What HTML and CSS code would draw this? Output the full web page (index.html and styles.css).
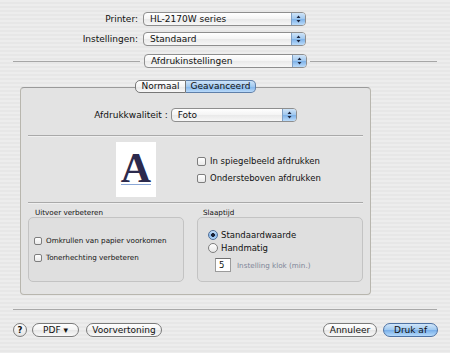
FILE: index.html
```html
<!DOCTYPE html>
<html lang="nl">
<head>
    <meta charset="UTF-8">
    <meta name="viewport" content="width=device-width, initial-scale=1.0">
    <title>Afdrukken</title>
    <link rel="stylesheet" href="styles.css">
</head>
<body>
    <div class="dialog">
        <div class="field-row">
            <span class="field-label">Printer:</span>
            <div class="popup popup-top">
                <span class="popup-text">HL-2170W series</span>
                <span class="stepper"><svg viewBox="0 0 13 12" width="13" height="12"><path d="M6.5 2.5 L8.5 5 H4.5 Z M6.5 9.5 L8.5 7 H4.5 Z" fill="#1d2740"/></svg></span>
            </div>
        </div>
        <div class="field-row">
            <span class="field-label">Instellingen:</span>
            <div class="popup popup-top">
                <span class="popup-text">Standaard</span>
                <span class="stepper"><svg viewBox="0 0 13 12" width="13" height="12"><path d="M6.5 2.5 L8.5 5 H4.5 Z M6.5 9.5 L8.5 7 H4.5 Z" fill="#1d2740"/></svg></span>
            </div>
        </div>
        <div class="pane-row">
            <span class="rule rule-left"></span>
            <div class="popup popup-top">
                <span class="popup-text">Afdrukinstellingen</span>
                <span class="stepper"><svg viewBox="0 0 13 12" width="13" height="12"><path d="M6.5 2.5 L8.5 5 H4.5 Z M6.5 9.5 L8.5 7 H4.5 Z" fill="#1d2740"/></svg></span>
            </div>
            <span class="rule rule-right"></span>
        </div>

        <div class="pane">
            <div class="tabs">
                <span class="tab tab-first">Normaal</span><span class="tab tab-last tab-active">Geavanceerd</span>
            </div>
            <div class="panel">
                <div class="quality-row">
                    <span class="quality-label">Afdrukkwaliteit :</span>
                    <div class="popup popup-quality">
                        <span class="popup-text">Foto</span>
                        <span class="stepper"><svg viewBox="0 0 13 12" width="13" height="12"><path d="M6.5 2.5 L8.5 5 H4.5 Z M6.5 9.5 L8.5 7 H4.5 Z" fill="#1d2740"/></svg></span>
                    </div>
                </div>
                <div class="separator"></div>
                <div class="preview-row">
                    <div class="preview"><span class="preview-letter">A</span></div>
                    <div class="check-list">
                        <label class="check"><span class="box"></span>In spiegelbeeld afdrukken</label>
                        <label class="check"><span class="box"></span>Ondersteboven afdrukken</label>
                    </div>
                </div>
                <div class="separator separator-low"></div>
                <div class="groups">
                    <div class="group group-left">
                        <span class="group-title">Uitvoer verbeteren</span>
                        <div class="group-box group-box-checks">
                            <label class="check check-small"><span class="box"></span>Omkrullen van papier voorkomen</label>
                            <label class="check check-small"><span class="box"></span>Tonerhechting verbeteren</label>
                        </div>
                    </div>
                    <div class="group group-right">
                        <span class="group-title">Slaaptijd</span>
                        <div class="group-box group-box-radios">
                            <label class="radio"><span class="dot dot-on"></span>Standaardwaarde</label>
                            <label class="radio"><span class="dot"></span>Handmatig</label>
                            <div class="minutes">
                                <span class="text-field">5</span>
                                <span class="hint">Instelling klok (min.)</span>
                            </div>
                        </div>
                    </div>
                </div>
            </div>
        </div>

        <div class="footer-rule"></div>
        <div class="footer">
            <span class="help">?</span>
            <span class="pill pill-pdf">PDF &#9662;</span>
            <span class="pill pill-preview">Voorvertoning</span>
            <span class="spacer"></span>
            <span class="pill pill-cancel">Annuleer</span>
            <span class="pill pill-default">Druk af</span>
        </div>
    </div>
</body>
</html>
```

FILE: styles.css
```css
body {
    margin: 0;
    font-family: "DejaVu Sans", "Liberation Sans", sans-serif;
    font-size: 9px;
    color: #111;
}
.dialog {
    width: 450px;
    height: 353px;
    box-sizing: border-box;
    padding-top: 12px;
    background: repeating-linear-gradient(#ededed 0 2px, #e7e7e7 2px 4px);
    overflow: hidden;
}

/* popups */
.popup {
    display: flex;
    align-items: center;
    height: 14px;
    box-sizing: border-box;
    border: 1px solid #8e8e8e;
    border-radius: 4px;
    background: linear-gradient(#ffffff, #f4f4f4 50%, #e9e9e9 51%, #f7f7f7);
    overflow: hidden;
}
.popup-top {
    width: 163px;
}
.popup-text {
    flex: 1;
    padding-left: 6px;
    line-height: 12px;
}
.stepper {
    display: flex;
    align-items: center;
    justify-content: center;
    width: 13px;
    height: 12px;
    border-left: 1px solid #7f9fc4;
    background: linear-gradient(#cfe4f8, #9fc7ee 50%, #7db1e8 51%, #bcdcfa);
}

.field-row {
    display: flex;
    align-items: center;
    gap: 5px;
    margin-bottom: 6px;
}
.field-label {
    width: 138px;
    text-align: right;
}
.pane-row {
    display: flex;
    align-items: center;
    padding: 2px 13px 0 13px;
}
.rule {
    flex: 1;
    height: 1px;
    background: #a6a6a6;
}
.rule-left {
    margin-right: 4px;
}
.rule-right {
    margin-left: 3px;
}

/* tabbed pane */
.pane {
    margin: 12px 0 0 20px;
    width: 351px;
}
.tabs {
    position: relative;
    z-index: 1;
    display: flex;
    justify-content: center;
    margin-bottom: -6px;
}
.tab {
    height: 13px;
    box-sizing: border-box;
    line-height: 11px;
    border: 1px solid #777;
    background: linear-gradient(#ffffff, #f3f3f3 50%, #e6e6e6 51%, #f8f8f8);
    text-align: center;
}
.tab-first {
    width: 51px;
    border-radius: 5px 0 0 5px;
}
.tab-last {
    width: 70px;
    border-left: none;
    border-radius: 0 5px 5px 0;
}
.tab-active {
    background: linear-gradient(#cde3f8, #a2c9ef 50%, #80b3e9 51%, #b9dafa);
    border-color: #5f7fa8;
}
.panel {
    height: 208px;
    box-sizing: border-box;
    padding: 20px 7px 0 7px;
    border: 1px solid #b8b6ae;
    border-top-color: #9a9a9a;
    border-radius: 4px;
    background: #e3e3e3;
}
.quality-row {
    display: flex;
    justify-content: center;
    align-items: center;
    gap: 3px;
}
.popup-quality {
    width: 126px;
}
.separator {
    height: 1px;
    margin-top: 13px;
    background: #a9a9a9;
    box-shadow: 0 1px 0 #efefef;
}
.separator-low {
    margin-top: 5px;
}
.preview-row {
    display: flex;
    align-items: center;
    gap: 41px;
    margin-top: 6px;
    padding-left: 88px;
}
.preview {
    display: flex;
    align-items: flex-end;
    justify-content: center;
    width: 40px;
    height: 55px;
    box-sizing: border-box;
    padding-bottom: 12px;
    background: #fff;
}
.preview-letter {
    font-family: "Liberation Serif", "Times New Roman", serif;
    font-weight: bold;
    font-size: 42px;
    line-height: 31px;
    color: #2c2a4d;
    border-bottom: 1px solid #8aa7d6;
}
.check-list {
    display: flex;
    flex-direction: column;
    gap: 7px;
}
.check,
.radio {
    display: flex;
    align-items: center;
    gap: 4px;
    font-size: 8.5px;
    line-height: 10px;
}
.box {
    width: 9px;
    height: 9px;
    box-sizing: border-box;
    border: 1px solid #7e7e7e;
    border-radius: 2px;
    background: linear-gradient(#ffffff, #e9e9e9);
}
.check-small {
    font-size: 7.2px;
    gap: 4px;
}
.check-small .box {
    width: 8px;
    height: 8px;
}

/* group boxes */
.groups {
    display: flex;
    gap: 13px;
    margin-top: 5px;
}
.group {
    display: flex;
    flex-direction: column;
}
.group-left {
    width: 156px;
}
.group-right {
    width: 166px;
}
.group-title {
    font-size: 7.2px;
    line-height: 9px;
    padding-left: 7px;
}
.group-right .group-title {
    padding-left: 6px;
}
.group-box {
    height: 65px;
    box-sizing: border-box;
    border: 1px solid #c3c3c3;
    border-radius: 5px;
    background: #dfdfdf;
}
.group-box-checks {
    display: flex;
    flex-direction: column;
    justify-content: center;
    gap: 7px;
    padding-left: 5px;
}
.group-box-radios {
    display: flex;
    flex-direction: column;
    padding: 12px 0 0 10px;
}
.radio {
    gap: 3px;
    margin-bottom: 3px;
}
.dot {
    width: 10px;
    height: 10px;
    box-sizing: border-box;
    border: 1px solid #7e7e7e;
    border-radius: 50%;
    background: linear-gradient(#ffffff, #e6e6e6);
}
.dot-on {
    border-color: #4f6f9a;
    background: radial-gradient(circle, #1b2236 0 1.6px, transparent 2.2px),
                linear-gradient(#cbe2f8, #89b9ea 55%, #b4d6f8);
}
.minutes {
    display: flex;
    align-items: center;
    gap: 6px;
    margin: 2px 0 0 7px;
}
.text-field {
    width: 16px;
    height: 14px;
    box-sizing: border-box;
    padding-left: 3px;
    border: 1px solid #9b9b9b;
    border-top-color: #6f6f6f;
    background: #fff;
    line-height: 12px;
    font-size: 8.5px;
}
.hint {
    font-size: 7.2px;
    color: #7d8598;
}

/* footer */
.footer-rule {
    height: 1px;
    margin: 14px 13px 0 13px;
    background: #a9a9a9;
}
.footer {
    display: flex;
    align-items: center;
    gap: 6px;
    margin-top: 13px;
    padding: 0 12px 0 13px;
}
.help {
    width: 14px;
    height: 14px;
    box-sizing: border-box;
    border: 1px solid #7c7c7c;
    border-radius: 50%;
    background: linear-gradient(#ffffff, #e3e3e3);
    text-align: center;
    font-weight: bold;
    font-size: 8.5px;
    line-height: 12px;
}
.pill {
    height: 14px;
    box-sizing: border-box;
    border: 1px solid #7a7a7a;
    border-radius: 7px;
    background: linear-gradient(#ffffff, #f3f3f3 50%, #e5e5e5 51%, #f9f9f9);
    text-align: center;
    line-height: 12px;
}
.pill-pdf {
    width: 47px;
    margin-left: -1px;
}
.pill-preview {
    width: 76px;
    margin-left: 1px;
}
.spacer {
    flex: 1;
}
.pill-cancel {
    width: 54px;
}
.pill-default {
    width: 55px;
    border-color: #4e72a3;
    background: linear-gradient(#d1e6fa, #9ec8f0 50%, #76ade8 51%, #b5dafb);
}
```
